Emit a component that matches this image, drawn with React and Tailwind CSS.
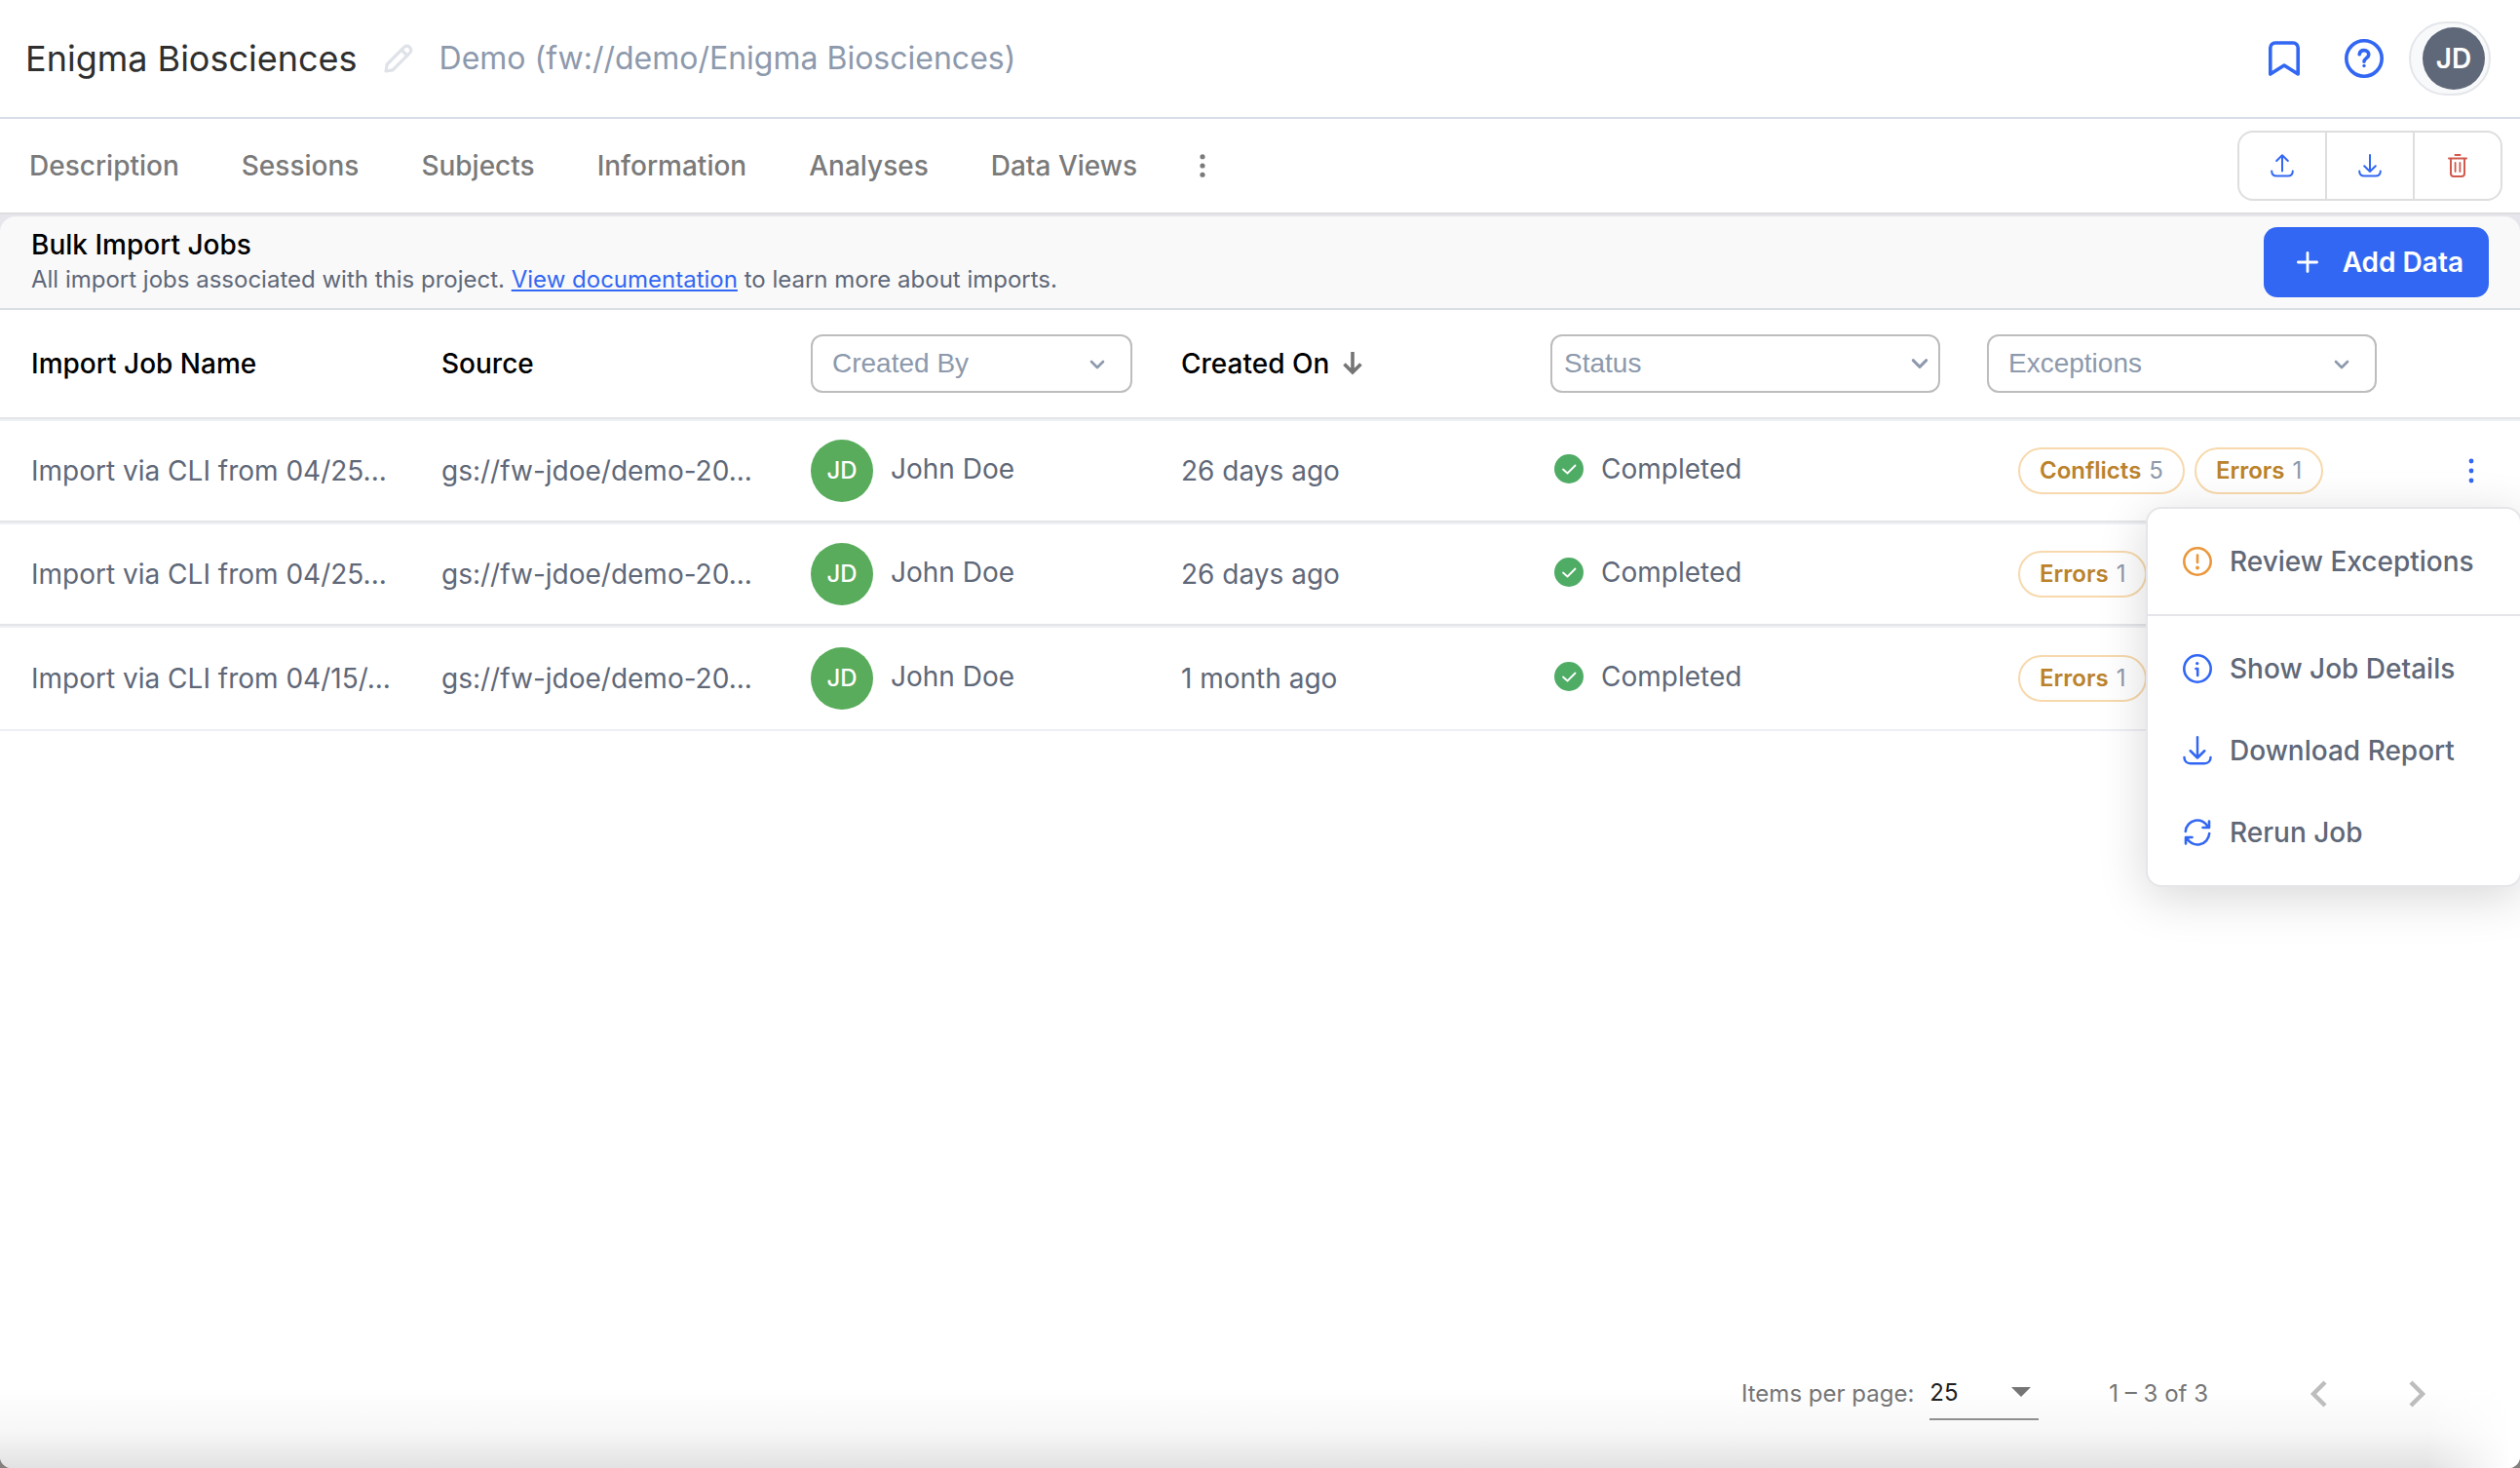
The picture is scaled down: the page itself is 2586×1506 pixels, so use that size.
import { useState } from "react";

const TABS = ["Description", "Sessions", "Subjects", "Information", "Analyses", "Data Views"];

const JOBS = [
  {
    id: 1,
    name: "Import via CLI from 04/25...",
    source: "gs://fw-jdoe/demo-20...",
    user: "John Doe",
    createdOn: "26 days ago",
    status: "Completed",
    exceptions: [
      { label: "Conflicts", count: 5 },
      { label: "Errors", count: 1 },
    ],
  },
  {
    id: 2,
    name: "Import via CLI from 04/25...",
    source: "gs://fw-jdoe/demo-20...",
    user: "John Doe",
    createdOn: "26 days ago",
    status: "Completed",
    exceptions: [{ label: "Errors", count: 1 }],
  },
  {
    id: 3,
    name: "Import via CLI from 04/15/...",
    source: "gs://fw-jdoe/demo-20...",
    user: "John Doe",
    createdOn: "1 month ago",
    status: "Completed",
    exceptions: [{ label: "Errors", count: 1 }],
  },
];

// ─── ICONS ─────────────────────────────────────────────────────────────────
function Icon({ children, className, viewBox = "0 0 24 24", strokeWidth = 2 }) {
  return (
    <svg
      viewBox={viewBox}
      className={className}
      fill="none"
      stroke="currentColor"
      strokeWidth={strokeWidth}
      strokeLinecap="round"
      strokeLinejoin="round"
      aria-hidden="true"
    >
      {children}
    </svg>
  );
}

function PencilIcon() {
  return (
    <Icon viewBox="0 0 30 30" className="w-[30px] h-[30px] text-[#dfe2e8]" strokeWidth={3.2}>
      <path d="M2 28l1.200-7L21 3.200a3.600 3.600 0 0 1 5 0l.8.8a3.600 3.600 0 0 1 0 5L9 26.800z" />
      <path d="M18 6.200l5.800 5.800" />
    </Icon>
  );
}

function BookmarkIcon() {
  return (
    <Icon viewBox="0 0 32 36" className="w-8 h-9" strokeWidth={3.6}>
      <path d="M1.8 34V7a5 5 0 0 1 5-5h18.4a5 5 0 0 1 5 5v27L16 25z" />
    </Icon>
  );
}

function HelpIcon() {
  return (
    <Icon viewBox="0 0 40 40" className="w-10 h-10" strokeWidth={3.6}>
      <circle cx="20" cy="20" r="18.2" />
      <path d="M15.2 15.800c.3-2.600 2.300-4.200 4.800-4.200 2.700 0 4.800 1.800 4.800 4.300 0 3.600-4.800 3.800-4.800 7.300" strokeWidth={3.6} />
      <circle cx="20" cy="27.500" r="1.700" fill="currentColor" stroke="none" />
    </Icon>
  );
}

function UploadIcon({ className }) {
  return (
    <Icon viewBox="0 0 24 24" className={className}>
      <path d="M12 17.500V1.500M6.200 7L12 1.200 17.800 7" />
      <path d="M1.200 17.500c0 3 2 5 5 5h11.600c3 0 5-2 5-5" />
    </Icon>
  );
}

function DownloadIcon({ className }) {
  return (
    <Icon viewBox="0 0 24 24" className={className}>
      <path d="M12 1v17M6.200 12.200L12 18l5.800-5.800" />
      <path d="M1.200 17.500c0 3 2 5 5 5h11.600c3 0 5-2 5-5" />
    </Icon>
  );
}

function TrashIcon() {
  return (
    <Icon viewBox="0 0 20 24" className="w-5 h-6 text-[#d1594d]">
      <path d="M7.500 1h5M1 4.500h18M3 4.500V20a3 3 0 0 0 3 3h8a3 3 0 0 0 3-3V4.500" />
      <path d="M7.600 9v9M12.400 9v9" strokeWidth={1.8} />
    </Icon>
  );
}

function ChevronIcon({ className }) {
  return (
    <Icon viewBox="0 0 16 10" className={className} strokeWidth={2.6}>
      <path d="M2 2l6 6 6-6" />
    </Icon>
  );
}

function AlertIcon() {
  return (
    <Icon viewBox="0 0 30 30" className="w-[30px] h-[30px] text-[#ea973b]" strokeWidth={2.6}>
      <circle cx="15" cy="15" r="13.700" />
      <path d="M15 8.500v7.500" />
      <circle cx="15" cy="21.500" r="1.900" fill="currentColor" stroke="none" />
    </Icon>
  );
}

function InfoIcon() {
  return (
    <Icon viewBox="0 0 30 30" className="w-[30px] h-[30px] text-[#3267f3]" strokeWidth={2.6}>
      <circle cx="15" cy="15" r="13.700" />
      <path d="M13.500 15h1.700v7" />
      <circle cx="14.700" cy="9.600" r="1.700" fill="currentColor" stroke="none" />
    </Icon>
  );
}

function RerunIcon() {
  return (
    <Icon viewBox="0 0 30 30" className="w-[30px] h-[30px] text-[#3267f3]" strokeWidth={2.6}>
      <path d="M2.800 14A12.200 12.200 0 0 1 26 9.500M27 3.500v6.500h-6.500" />
      <path d="M27.200 16A12.200 12.200 0 0 1 4 20.500M3 26.500V20h6.500" />
    </Icon>
  );
}

function DotsIcon({ className, r = 2.4 }) {
  return (
    <svg viewBox="0 0 6 26" className={className} fill="currentColor" aria-hidden="true">
      <circle cx="3" cy="3" r={r} />
      <circle cx="3" cy="13" r={r} />
      <circle cx="3" cy="23" r={r} />
    </svg>
  );
}

function CheckBadge() {
  return (
    <svg viewBox="0 0 30 30" className="w-[30px] h-[30px] shrink-0" aria-hidden="true">
      <circle cx="15" cy="15" r="15" fill="#4fac65" />
      <path d="M9 15.500l4.500 4L21.500 11.500" fill="none" stroke="#fff" strokeWidth="1.800" strokeLinecap="round" strokeLinejoin="round" />
    </svg>
  );
}

// ─── TABLE PARTS ───────────────────────────────────────────────────────────
function FilterSelect({ label, width, padding, chevron }) {
  return (
    <div className={`relative ${width}`}>
      <select
        aria-label={label}
        defaultValue=""
        className={`appearance-none w-full h-[60px] rounded-xl border-2 border-[#bdbdbd] bg-white font-['Liberation_Sans',sans-serif] text-[28px] font-normal text-[#8d99ac] outline-none ${padding}`}
      >
        <option value="">{label}</option>
      </select>
      <ChevronIcon className={`absolute pointer-events-none text-[#8d99ac] ${chevron}`} />
    </div>
  );
}

function ExceptionPill({ label, count }) {
  return (
    <span className="inline-flex items-center gap-2 h-12 px-5 rounded-full border-2 border-[#f7d9ad] text-2xl whitespace-nowrap">
      <span className="font-semibold text-[#bb822c]">{label}</span>
      <span className="text-[#8d99ac]">{count}</span>
    </span>
  );
}

function MenuItem({ icon, children }) {
  return (
    <li>
      <button className="flex items-center gap-[18px] w-full h-21 px-9 text-[28px] font-medium text-[#5f6878] whitespace-nowrap">
        {icon}
        {children}
      </button>
    </li>
  );
}

function JobMenu() {
  return (
    <div className="absolute top-[88px] -right-[2px] z-10 w-[386px] rounded-2xl border-2 border-[#e5e5ea] bg-white shadow-[0_10px_50px_rgba(0,0,0,0.16)]">
      <ul className="py-3 border-b-2 border-[#e5e5ea]">
        <MenuItem icon={<AlertIcon />}>Review Exceptions</MenuItem>
      </ul>
      <ul className="py-3">
        <MenuItem icon={<InfoIcon />}>Show Job Details</MenuItem>
        <MenuItem icon={<DownloadIcon className="w-[30px] h-[30px] text-[#3267f3]" />}>Download Report</MenuItem>
        <MenuItem icon={<RerunIcon />}>Rerun Job</MenuItem>
      </ul>
    </div>
  );
}

function JobRow({ job, last, menuOpen, onToggle }) {
  const cell = `pl-8 border-t-2 border-t-[#eef0f3] border-b-2 ${last ? "h-[108px] border-b-[#eeeff5]" : "h-[106px] border-b-[#e3e5e9]"}`;

  return (
    <tr>
      <td className={cell}>{job.name}</td>
      <td className={cell}>{job.source}</td>
      <td className={cell}>
        <div className="flex items-center gap-[18px]">
          <span className="flex items-center justify-center w-16 h-16 rounded-full bg-[#58ac5b] text-white text-2xl font-medium">
            JD
          </span>
          <span className="pb-1">{job.user}</span>
        </div>
      </td>
      <td className={cell}>{job.createdOn}</td>
      <td className={cell}>
        <div className="flex items-center gap-[18px] pl-1 pb-1">
          <CheckBadge />
          <span>{job.status}</span>
        </div>
      </td>
      <td className={cell}>
        <div className="flex items-center gap-[10px] pl-8">
          {job.exceptions.map((ex) => (
            <ExceptionPill key={ex.label} label={ex.label} count={ex.count} />
          ))}
        </div>
      </td>
      <td className={`relative ${cell}`}>
        <button
          onClick={onToggle}
          aria-label="Job actions"
          className="flex items-center justify-center w-16 h-12 text-[#3267f3]"
        >
          <DotsIcon className="w-[6px] h-[26px]" />
        </button>
        {menuOpen && <JobMenu />}
      </td>
    </tr>
  );
}

export default function App() {
  const [openMenu, setOpenMenu] = useState(1);

  return (
    <div className="bg-[#85807e] font-[Inter,sans-serif]">
      <div className="min-h-screen flex flex-col bg-white rounded-b-xl overflow-hidden">

        {/* Project header */}
        <header className="flex items-center h-[122px] pl-[26px] pr-[30px] border-b-2 border-[#d9dde8]">
          <h1 className="text-[36px] text-[#2f2f2f]">Enigma Biosciences</h1>
          <button aria-label="Edit project name" className="mx-[27px]">
            <PencilIcon />
          </button>
          <span className="text-[32px] text-[#8d99ac]">Demo (fw://demo/Enigma Biosciences)</span>

          <div className="flex items-center ml-auto text-[#3267f3]">
            <button aria-label="Bookmarks">
              <BookmarkIcon />
            </button>
            <button aria-label="Help" className="ml-[46px]">
              <HelpIcon />
            </button>
            <button className="flex items-center justify-end w-[84px] h-[76px] ml-[26px] pr-1 rounded-full border-2 border-[#e4e6ea] bg-[#f8f9fb]">
              <span className="flex items-center justify-center w-16 h-16 rounded-full bg-[#5f6878] text-white text-[28px] font-semibold">
                JD
              </span>
            </button>
          </div>
        </header>

        {/* Tabs */}
        <nav className="flex items-center h-[98px] pl-[30px] pr-[18px] border-b-2 border-[#dedede]">
          <div className="flex items-center gap-16 text-[28px] font-medium text-[#7a7a7a]">
            {TABS.map((tab) => (
              <a key={tab} href="#">{tab}</a>
            ))}
            <button aria-label="More tabs">
              <DotsIcon className="w-[6px] h-6" r={2.8} />
            </button>
          </div>
          <div className="flex ml-auto h-[72px] rounded-2xl border-2 border-[#dedede] divide-x-2 divide-[#dedede] text-[#3267f3]">
            <button aria-label="Upload" className="flex items-center justify-center w-[90px]">
              <UploadIcon className="w-6 h-6" />
            </button>
            <button aria-label="Download" className="flex items-center justify-center w-[90px]">
              <DownloadIcon className="w-6 h-6" />
            </button>
            <button aria-label="Delete" className="flex items-center justify-center w-[88px]">
              <TrashIcon />
            </button>
          </div>
        </nav>

        {/* Section heading */}
        <div className="bg-[#e6e6ec] pt-[2px]">
          <section className="flex items-center justify-between h-24 px-8 rounded-t-2xl border-b-2 border-[#d9dfe4] bg-[#f9f9f9]">
            <div>
              <h2 className="text-[28px] leading-9 font-medium text-black">Bulk Import Jobs</h2>
              <p className="text-2xl leading-9 text-[#5f6878]">
                All import jobs associated with this project.{" "}
                <a href="#" className="text-[#3267f3] underline underline-offset-2 decoration-2">View documentation</a>{" "}
                to learn more about imports.
              </p>
            </div>
            <button className="flex items-center h-[72px] pl-[34px] pr-[26px] gap-[25px] rounded-[14px] bg-[#3267f3] text-white text-[28px] font-semibold">
              <Icon viewBox="0 0 22 22" className="w-[22px] h-[22px]" strokeWidth={2.8}>
                <path d="M11 1.400v19.200M1.400 11h19.200" />
              </Icon>
              Add Data
            </button>
          </section>
        </div>

        {/* Jobs table */}
        <main className="flex-1">
          <table className="w-full table-fixed border-separate border-spacing-0 text-[28px] text-[#5f6878]">
            <colgroup>
              <col className="w-[421px]" />
              <col className="w-[379px]" />
              <col className="w-[380px]" />
              <col className="w-[379px]" />
              <col className="w-[448px]" />
              <col className="w-[465px]" />
              <col className="w-[114px]" />
            </colgroup>
            <thead>
              <tr className="h-28 text-left text-black [&>th]:pl-8 [&>th]:font-medium [&>th]:border-b-2 [&>th]:border-[#e3e5e9]">
                <th>Import Job Name</th>
                <th>Source</th>
                <th>
                  <FilterSelect label="Created By" width="w-[330px]" padding="pl-5" chevron="right-7 top-[26px] w-4 h-[10px]" />
                </th>
                <th>
                  <button className="flex items-center gap-[14px]">
                    Created On
                    <svg viewBox="0 0 20 24" className="w-5 h-6 text-[#757575]" fill="none" stroke="currentColor" strokeWidth="3.600" aria-hidden="true">
                      <path d="M10 0v21M1.500 12.500L10 21l8.500-8.500" />
                    </svg>
                  </button>
                </th>
                <th>
                  <FilterSelect label="Status" width="w-[400px]" padding="pl-3" chevron="right-3 top-6 w-[18px] h-3" />
                </th>
                <th>
                  <FilterSelect label="Exceptions" width="w-[400px]" padding="pl-5" chevron="right-7 top-[26px] w-4 h-[10px]" />
                </th>
                <th aria-label="Actions" />
              </tr>
            </thead>
            <tbody>
              {JOBS.map((job, idx) => (
                <JobRow
                  key={job.id}
                  job={job}
                  last={idx === JOBS.length - 1}
                  menuOpen={openMenu === job.id}
                  onToggle={() => setOpenMenu(openMenu === job.id ? null : job.id)}
                />
              ))}
            </tbody>
          </table>
        </main>

        {/* Paginator */}
        <footer className="relative flex items-center justify-end h-[152px] pr-24 text-2xl text-[#757575] bg-linear-to-b from-white from-45% via-[#f7f7f7] via-75% to-[#e2e2e2]">
          <div className="absolute right-0 bottom-0 w-24 h-24 bg-linear-to-r from-transparent to-white to-90%" />
          <label htmlFor="page-size">Items per page:</label>
          <div className="relative ml-4">
            <select
              id="page-size"
              defaultValue="25"
              className="appearance-none w-28 h-[54px] border-b-2 border-[#8f8f8f] text-2xl text-[#1f1f1f] outline-none"
            >
              <option>25</option>
              <option>50</option>
              <option>100</option>
            </select>
            <svg viewBox="0 0 20 10" className="absolute right-2 top-5 w-5 h-[10px] pointer-events-none" aria-hidden="true">
              <path d="M0 0h20L10 10z" fill="#757575" />
            </svg>
          </div>
          <span className="ml-[72px]">1 – 3 of 3</span>
          <button aria-label="Previous page" disabled className="ml-[104px] text-[#bdbdbd]">
            <svg viewBox="0 0 18 28" className="w-[18px] h-7" fill="none" stroke="currentColor" strokeWidth="4.400" aria-hidden="true">
              <path d="M16 2L4 14l12 12" />
            </svg>
          </button>
          <button aria-label="Next page" disabled className="relative ml-[84px] text-[#bdbdbd]">
            <svg viewBox="0 0 18 28" className="w-[18px] h-7" fill="none" stroke="currentColor" strokeWidth="4.400" aria-hidden="true">
              <path d="M2 2l12 12L2 26" />
            </svg>
          </button>
        </footer>
      </div>
    </div>
  );
}
